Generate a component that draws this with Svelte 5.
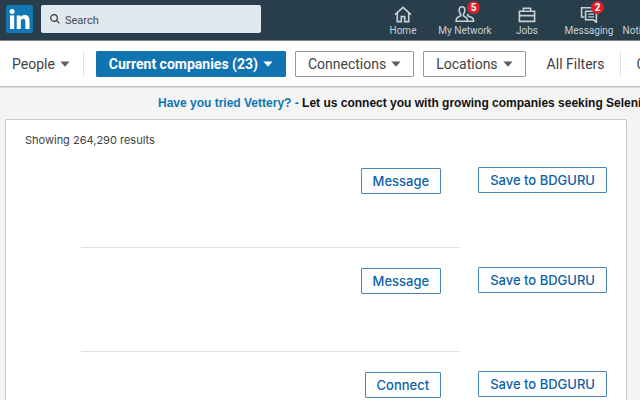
<script lang="ts">

	// top navigation
	const nav = [
		{ label: 'Home', icon: 'home', count: 0 },
		{ label: 'My Network', icon: 'network', count: 5 },
		{ label: 'Jobs', icon: 'jobs', count: 0 },
		{ label: 'Messaging', icon: 'messaging', count: 2 },
		{ label: 'Notifications', icon: 'bell', count: 0 }
	];

	// one entry per search result, with its main action
	const results = ['Message', 'Message', 'Connect'];

	let query = $state('');
	let current = $state(true);
</script>

{#snippet icon(name: string)}
	<svg class="icon" viewBox="0 0 20 18" width="20" height="18" aria-hidden="true">
		{#if name == 'home'}
			<path d="M2 9.6 L10 2.4 L18 9.6 M4.3 8 V16.6 H8.3 V11.6 H11.7 V16.6 H15.7 V8" />
		{:else if name == 'network'}
			<path d="M7 1.8 C5 1.8 4 3.3 4.2 5.5 C4.3 7.5 5.2 8.6 5.6 9.2 V10.8 L2.2 12.6 C1.2 13.2 1.1 14 1.1 16.2 H12.4 C12.4 14 12.2 13.2 11.2 12.6 L8.4 10.8 V9.2 C9 8.6 9.7 7.5 9.8 5.5 C10 3.3 9 1.8 7 1.8 Z" />
			<path d="M12 9.2 L13 9.8 V11 L17.2 12.8 C18.4 13.4 18.6 14.2 18.6 16.2 H12.4" />
		{:else if name == 'jobs'}
			<path d="M2.4 6.2 H17.6 V16.4 H2.4 Z M6.4 6.2 V3.2 H13.6 V6.2 M2.4 10.6 H17.6" />
		{:else if name == 'messaging'}
			<path d="M5.4 12 H2.6 V2.8 H14 V4.6" />
			<path d="M6.6 6.2 H17.4 V17.4 L14.4 14.8 H6.6 Z" />
			<path class="thin" d="M9.2 9.2 H15 M9.2 11.8 H15" />
		{:else}
			<path d="M4 13 V8 C4 1 16 1 16 8 V13 L18 15 H2 Z" />
		{/if}
	</svg>
{/snippet}

{#snippet caret()}
	<svg class="caret" viewBox="0 0 10 6" width="10" height="6" aria-hidden="true"><path d="M0.4 0.4 H9.6 L5 5.8 Z" /></svg>
{/snippet}

<div class="page">
	<header>
		<a class="logo" href="#home" aria-label="LinkedIn">
			<svg viewBox="0 0 27 28" width="27" height="28" aria-hidden="true">
				<rect width="27" height="28" rx="2" />
				<circle cx="6.1" cy="6.4" r="2.5" />
				<path d="M4 10.4 H8.2 V24 H4 Z" />
				<path d="M10.7 10.4 H14.6 V12.3 C15.4 10.9 16.9 10 18.7 10 C22.6 10 23.5 12.6 23.5 16.2 V24 H19.4 V17.1 C19.4 15.2 19.1 13.7 17.2 13.7 C15.3 13.7 14.8 15.2 14.8 17 V24 H10.7 Z" />
			</svg>
		</a>
		<label class="search">
			<svg viewBox="0 0 10 10" width="10" height="10" aria-hidden="true">
				<circle cx="4" cy="4" r="3.3" />
				<path d="M6.4 6.4 L9.4 9.4" />
			</svg>
			<input type="text" placeholder="Search" aria-label="Search" bind:value={query} />
		</label>
		<nav>
			{#each nav as item}
				<a href="#{item.icon}">
					<span class="glyph">
						{@render icon(item.icon)}
						{#if item.count}
							<b class="badge">{item.count}</b>
						{/if}
					</span>
					<span>{item.label}</span>
				</a>
			{/each}
		</nav>
	</header>

	<!-- search filters -->
	<div class="filters">
		<button class="plain people">People {@render caret()}</button>
		<button class="filter" class:active={current} onclick={() => (current = !current)}>
			Current companies (23) {@render caret()}
		</button>
		<button class="filter">Connections {@render caret()}</button>
		<button class="filter">Locations {@render caret()}</button>
		<button class="plain all">All Filters</button>
		<button class="plain clear">Clear</button>
	</div>

	<p class="promo">
		<a href="#vettery">Have you tried Vettery? -</a> Let us connect you with growing companies seeking Selenium
	</p>

	<main>
		<h1>Showing 264,290 results</h1>
		<ul>
			{#each results as action}
				<li>
					<div class="person">
						<button class="action">{action}</button>
					</div>
					<button class="action save">Save to BDGURU</button>
				</li>
			{/each}
		</ul>
	</main>
</div>

<style>
	:global(body){
		background: #f4f4f4;
	}

	.page{
		display: flex;
		flex-direction: column;
		height: 100vh;
		overflow: hidden;
		font-family: Roboto, "Liberation Sans", sans-serif;
		color: #404244;
	}

	button, input{
		font: inherit;
		color: inherit;
	}

	button{
		cursor: pointer;
		white-space: nowrap;
		flex: none;
	}

	a{
		text-decoration: none;
	}

	/* dark top bar */
	header{
		display: flex;
		flex: none;
		height: 41px;
		padding: 5px 0 0 6px;
		box-sizing: border-box;
		background: #283e4a;
		border-bottom: 1px solid #7d8589;
	}

	.logo{
		flex: none;
		width: 27px;
		height: 28px;

		& svg{
			display: block;
			fill: #fff;
		}

		& rect{
			fill: #1178b3;
		}
	}

	.search{
		display: flex;
		flex: none;
		align-items: center;
		gap: 5px;
		width: 220px;
		height: 28px;
		margin-left: 8px;
		padding-left: 9px;
		box-sizing: border-box;
		border-radius: 2px;
		background: #e1e9ee;

		& svg{
			flex: none;
			fill: none;
			stroke: #33393d;
			stroke-width: 1.2;
		}

		& input{
			flex: 1;
			min-width: 0;
			padding: 2px 0 0;
			border: 0;
			outline: 0;
			background: none;
			font-size: 11px;
		}

		& input::placeholder{
			color: #434a50;
			opacity: 1;
		}
	}

	nav{
		display: flex;
		margin-left: auto;
		margin-right: -42px;

		& a{
			display: flex;
			flex-direction: column;
			align-items: center;
			width: 62px;
			gap: 1px;
			font-size: 10px;
			line-height: 14px;
			white-space: nowrap;
			color: #c7d1d8;
		}
	}

	.glyph{
		position: relative;
		height: 18px;
	}

	.icon{
		display: block;
		fill: none;
		stroke: #c7d1d8;
		stroke-width: 1.6;
	}

	.thin{
		stroke-width: 1.2;
	}

	.badge{
		position: absolute;
		top: -4px;
		left: 12px;
		width: 13px;
		border-radius: 7px;
		background: #dd1f2c;
		color: #fff;
		font-size: 10px;
		line-height: 13px;
		text-align: center;
	}

	/* filter bar */
	.filters{
		display: flex;
		flex: none;
		align-items: center;
		height: 45px;
		background: #fff;
		border-bottom: 1px solid #bfbfbf;
		box-shadow: 0 1px 1px #dedede;
		font-size: 14px;
		z-index: 1;
	}

	.plain, .filter{
		display: flex;
		align-items: center;
		gap: 5px;
		height: 26px;
		border: 0;
		background: none;
	}

	.filter{
		margin-right: 9px;
		padding: 0 12px;
		border: 1px solid #999;
		border-radius: 1px;
	}

	.active{
		background: #1074b3;
		border-color: #1074b3;
		color: #fff;
		font-weight: bold;
	}

	.people{
		margin-right: 12px;
		padding: 0 13px 0 12px;
		border-right: 1px solid #e0e0e0;
	}

	.all{
		padding: 0 15px 0 12px;
		border-right: 1px solid #e0e0e0;
	}

	.clear{
		padding: 0 16px;
	}

	.caret{
		fill: #5c5e60;
	}

	.active .caret{
		fill: #fff;
	}

	.promo{
		flex: none;
		margin: 0;
		padding: 8px 0 8px 158px;
		font: bold 12px/16px "Liberation Sans", Arial, sans-serif;
		white-space: nowrap;
		color: #111;

		& a{
			color: #1074b3;
		}
	}

	/* results card */
	main{
		flex: 1;
		margin: 0 13px 0 5px;
		border: 1px solid #c9c9c9;
		border-bottom: 0;
		border-radius: 2px 2px 0 0;
		background: #fff;
	}

	h1{
		margin: 0;
		padding: 13px 19px 0;
		font: 11px/15px Inter, Roboto, sans-serif;
	}

	ul{
		margin: 0;
		padding: 0 19px 0 75px;
		list-style: none;
	}

	li{
		display: flex;
		gap: 18px;
		height: 104px;
	}

	li:first-child{
		height: 100px;
	}

	.person{
		display: flex;
		flex: 1;
		justify-content: flex-end;
		align-items: flex-start;
		padding: 20px 19px 0 0;
		border-bottom: 1px solid #dfdfdf;
	}

	.action{
		height: 26px;
		padding: 0 11px;
		border: 1px solid #4883b9;
		border-radius: 1px;
		background: #fff;
		color: #0c62aa;
		font: 500 13px Inter, Roboto, sans-serif;
	}

	.save{
		margin-top: 19px;
	}
</style>
